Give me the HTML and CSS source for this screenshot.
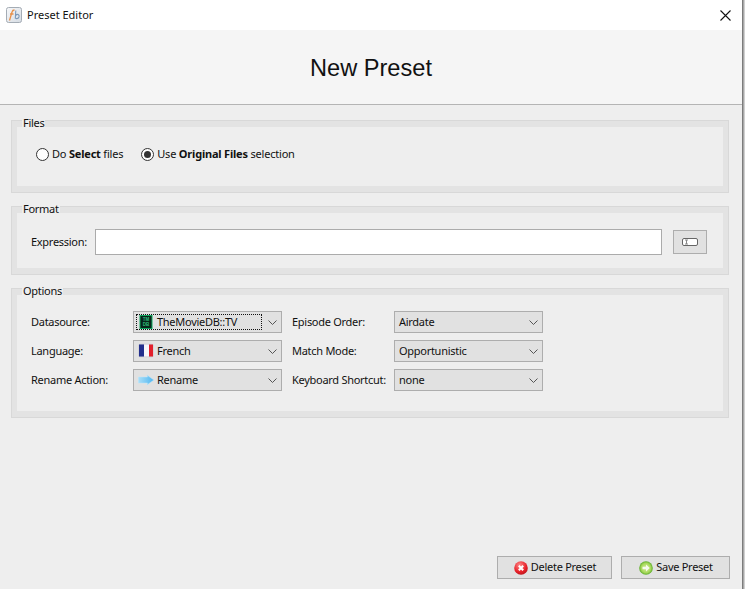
FILE: index.html
```html
<!DOCTYPE html>
<html lang="en">
<head>
<meta charset="utf-8">
<title>Preset Editor</title>
<link rel="stylesheet" href="styles.css">
</head>
<body>
<div class="screen">
<div class="window">
  <header class="titlebar">
    <svg class="app-icon" width="16" height="16" viewBox="0 0 16 16">
      <defs><linearGradient id="tile" x1="0" y1="0" x2="1" y2="1"><stop offset="0" stop-color="#f7f8fa"/><stop offset="1" stop-color="#d5dbe2"/></linearGradient></defs>
      <rect x="0.500" y="0.500" width="15" height="15" rx="2" fill="url(#tile)" stroke="#a4acb5"/>
      <path d="M3.500 13.500 L6 5 Q6.500 3 8.500 3 M4 7 H7.500" fill="none" stroke="#e8914a" stroke-width="1.300"/>
      <path d="M9.800 3.500 L9.300 11.500 M9.600 8.500 Q11 7 12.200 7.500 Q13.500 8.200 13 10 Q12.300 12 9.500 11.500" fill="none" stroke="#7c98b8" stroke-width="1.100"/>
    </svg>
    <span class="window-title txt">Preset Editor</span>
    <svg class="close-icon" width="11" height="11" viewBox="0 0 11 11">
      <path d="M0.500 0.500 L10.500 10.500 M10.500 0.500 L0.500 10.500" stroke="#111" stroke-width="1.100" fill="none"/>
    </svg>
  </header>
  <div class="banner"><h1>New Preset</h1></div>
  <main class="content">
    <section class="panel panel-files">
      <span class="legend">Files</span>
      <div class="panel-inner files-row">
        <label class="radio"><span class="dot"></span><span class="txt">Do <b>Select</b> files</span></label>
        <label class="radio"><span class="dot on"></span><span class="txt">Use <b>Original Files</b> selection</span></label>
      </div>
    </section>
    <section class="panel panel-format">
      <span class="legend">Format</span>
      <div class="panel-inner format-row">
        <span class="format-label txt">Expression:</span>
        <div class="text-input"></div>
        <div class="icon-btn">
          <svg width="16" height="8" viewBox="0 0 16 8">
            <rect x="0.500" y="0.500" width="15" height="7" rx="1.500" fill="#fff" stroke="#666"/>
            <path d="M3 2 H6 M3 6 H6 M4.500 2 V6" stroke="#888" fill="none"/>
          </svg>
        </div>
      </div>
    </section>
    <section class="panel panel-options">
      <span class="legend">Options</span>
      <div class="panel-inner options-grid">
        <span class="opt-label txt">Datasource:</span>
        <div class="combo focused">
          <span class="combo-value">
            <svg class="combo-icon" width="16" height="16" viewBox="0 0 16 16">
              <rect x="2" y="1.500" width="12" height="13" fill="#08261a" stroke="#0fa860"/>
              <text class="tmdb-mark" x="8" y="7.200">TM</text>
              <text class="tmdb-mark" x="8" y="12">DB</text>
            </svg>
            <span class="txt">TheMovieDB::TV</span>
          </span>
          <svg class="chev" width="9" height="5" viewBox="0 0 9 5"><path d="M0.500 0.500 L4.500 4.500 L8.500 0.500" fill="none" stroke="#555"/></svg>
        </div>
        <span class="opt-label opt-label-2 txt">Episode Order:</span>
        <div class="combo"><span class="combo-value"><span class="txt">Airdate</span></span><svg class="chev" width="9" height="5" viewBox="0 0 9 5"><path d="M0.500 0.500 L4.500 4.500 L8.500 0.500" fill="none" stroke="#555"/></svg></div>

        <span class="opt-label txt">Language:</span>
        <div class="combo">
          <span class="combo-value">
            <svg class="combo-icon" width="16" height="16" viewBox="0 0 16 16">
              <rect x="0.500" y="0.800" width="15" height="13.400" rx="1.500" fill="#c9c9d2"/>
              <rect x="1" y="1.500" width="5" height="12" fill="#222f8c"/>
              <rect x="6" y="1.500" width="5" height="12" fill="#f6f6fa"/>
              <rect x="11" y="1.500" width="4" height="12" fill="#e2202c"/>
            </svg>
            <span class="txt">French</span>
          </span>
          <svg class="chev" width="9" height="5" viewBox="0 0 9 5"><path d="M0.500 0.500 L4.500 4.500 L8.500 0.500" fill="none" stroke="#555"/></svg>
        </div>
        <span class="opt-label opt-label-2 txt">Match Mode:</span>
        <div class="combo"><span class="combo-value"><span class="txt">Opportunistic</span></span><svg class="chev" width="9" height="5" viewBox="0 0 9 5"><path d="M0.500 0.500 L4.500 4.500 L8.500 0.500" fill="none" stroke="#555"/></svg></div>

        <span class="opt-label txt">Rename Action:</span>
        <div class="combo">
          <span class="combo-value">
            <svg class="combo-icon" width="16" height="16" viewBox="0 0 16 16">
              <defs><linearGradient id="arrow" x1="0" y1="0" x2="1" y2="0"><stop offset="0" stop-color="#a9def8"/><stop offset="1" stop-color="#4fb6f0"/></linearGradient></defs>
              <path d="M0.300 5 H9.500 L9 3 L15.800 8 L9 13 L9.500 11 H0.300 Z" fill="url(#arrow)" stroke="#bfe6fa" stroke-width="0.500"/>
            </svg>
            <span class="txt">Rename</span>
          </span>
          <svg class="chev" width="9" height="5" viewBox="0 0 9 5"><path d="M0.500 0.500 L4.500 4.500 L8.500 0.500" fill="none" stroke="#555"/></svg>
        </div>
        <span class="opt-label opt-label-2 txt">Keyboard Shortcut:</span>
        <div class="combo"><span class="combo-value"><span class="txt">none</span></span><svg class="chev" width="9" height="5" viewBox="0 0 9 5"><path d="M0.500 0.500 L4.500 4.500 L8.500 0.500" fill="none" stroke="#555"/></svg></div>
      </div>
    </section>
  </main>
  <footer class="actions">
    <div class="btn btn-delete">
      <svg width="16" height="16" viewBox="0 0 16 16">
        <defs><radialGradient id="red" cx="0.400" cy="0.300" r="0.800"><stop offset="0" stop-color="#ff8a8a"/><stop offset="0.600" stop-color="#e8222a"/><stop offset="1" stop-color="#b01018"/></radialGradient></defs>
        <circle cx="8" cy="8" r="6.800" fill="url(#red)"/>
        <path d="M5.800 5.800 L10.200 10.200 M10.200 5.800 L5.800 10.200" stroke="#fff" stroke-width="2"/>
      </svg>
      <span class="txt">Delete Preset</span>
    </div>
    <div class="btn btn-save">
      <svg width="16" height="16" viewBox="0 0 16 16">
        <defs><radialGradient id="green" cx="0.500" cy="0.500" r="0.500"><stop offset="0" stop-color="#d8ef9e"/><stop offset="0.700" stop-color="#a6d85a"/><stop offset="1" stop-color="#5cac2a"/></radialGradient></defs>
        <circle cx="8" cy="8" r="6.800" fill="url(#green)"/>
        <path d="M4.500 6.800 H8 V4.500 L11.800 8 L8 11.500 V9.200 H4.500 Z" fill="#f7faee"/>
      </svg>
      <span class="txt">Save Preset</span>
    </div>
  </footer>
</div>
</div>
</body>
</html>
```
FILE: styles.css
```css
* { box-sizing: border-box; }
html, body { margin: 0; padding: 0; height: 100%; }
body {
  background: #d0d0d0;
  font-family: "Noto Sans", Tahoma, sans-serif;
  font-size: 11px;
  color: #111;
  letter-spacing: -0.280px;
  overflow: hidden;
}
.screen {
  width: 745px;
  height: 589px;
  display: flex;
}
.window {
  width: 743px;
  height: 589px;
  display: flex;
  flex-direction: column;
  background: #eeeeee;
  border-right: 1px solid #7c7c7c;
  box-shadow: 1px 0 0 #a8a8a8;
}
.txt { padding-bottom: 2px; }
.titlebar {
  height: 30px;
  background: #fff;
  display: flex;
  align-items: center;
  padding: 0 11px 0 6px;
  flex: none;
}
.app-icon { margin-right: 5px; }
.window-title { flex: 1; letter-spacing: 0; }
.banner {
  height: 75px;
  flex: none;
  background: #f5f5f5;
  border-bottom: 1px solid #b4b4b4;
  display: flex;
  align-items: center;
  justify-content: center;
  padding-top: 2px;
}
.banner h1 {
  margin: 0;
  font-family: "Liberation Sans", Arial, sans-serif;
  font-weight: 400;
  font-size: 23.600px;
  letter-spacing: 0;
  color: #111;
}
.content {
  flex: 1;
  padding: 15px 13px 0 11px;
  display: flex;
  flex-direction: column;
  gap: 13px;
}
.panel {
  position: relative;
  background: #e3e3e3;
  border: 1px solid #d8d8d8;
  padding: 6px 5px;
}
.panel-files { height: 73px; }
.panel-format { height: 69px; }
.panel-options { height: 130px; }
.legend {
  position: absolute;
  left: 10px;
  top: -5px;
  background: #eeeeee;
  padding: 0 1px;
  line-height: 13px;
}
.panel-inner { height: 100%; background: #eeeeee; }
.files-row { display: flex; align-items: center; padding: 0 0 5px 19px; gap: 18px; }
.radio { display: flex; align-items: center; gap: 3px; letter-spacing: -0.200px; }
.radio b { font-weight: 700; }
.dot {
  width: 13px;
  height: 13px;
  border-radius: 50%;
  border: 1px solid #333;
  background: #fff;
  display: flex;
  align-items: center;
  justify-content: center;
}
.dot.on::after {
  content: "";
  width: 7px;
  height: 7px;
  border-radius: 50%;
  background: #333;
}
.format-row { display: flex; align-items: center; padding: 3px 16px 0 14px; }
.format-label { width: 64px; }
.text-input {
  width: 567px;
  height: 26px;
  background: #fff;
  border: 1px solid #ababab;
}
.icon-btn {
  width: 34px;
  height: 24px;
  margin-left: 11px;
  background: #e1e1e1;
  border: 1px solid #adadad;
  display: flex;
  align-items: center;
  justify-content: center;
}
.options-grid {
  display: grid;
  grid-template-columns: 102px 149px 112px 149px;
  grid-auto-rows: 22px;
  row-gap: 7px;
  align-items: center;
  padding: 16px 0 0 14px;
  justify-content: start;
}
.opt-label { white-space: nowrap; }
.opt-label-2 { padding-left: 10px; }
.combo {
  height: 22px;
  background: #e1e1e1;
  border: 1px solid #adadad;
  display: flex;
  align-items: center;
  justify-content: space-between;
  padding: 0 4px;
}
.combo-value { display: flex; align-items: center; gap: 3px; }
.combo-icon { flex: none; }
.tmdb-mark {
  font-family: "Liberation Sans", sans-serif;
  font-size: 4.500px;
  font-weight: 700;
  fill: #2fbf7f;
  text-anchor: middle;
  letter-spacing: 0;
}
.combo.focused .combo-value {
  border: 1px dotted #111;
  width: 126px;
  height: 16px;
  margin-left: -2px;
  padding-left: 1px;
}
.chev { flex: none; }
.actions {
  flex: none;
  display: flex;
  justify-content: flex-end;
  gap: 9px;
  padding: 0 12px 10px 0;
}
.btn {
  height: 23px;
  background: #e1e1e1;
  border: 1px solid #adadad;
  display: flex;
  align-items: center;
  justify-content: center;
  gap: 2px;
}
.btn-delete { width: 115px; }
.btn-save { width: 109px; }
```
